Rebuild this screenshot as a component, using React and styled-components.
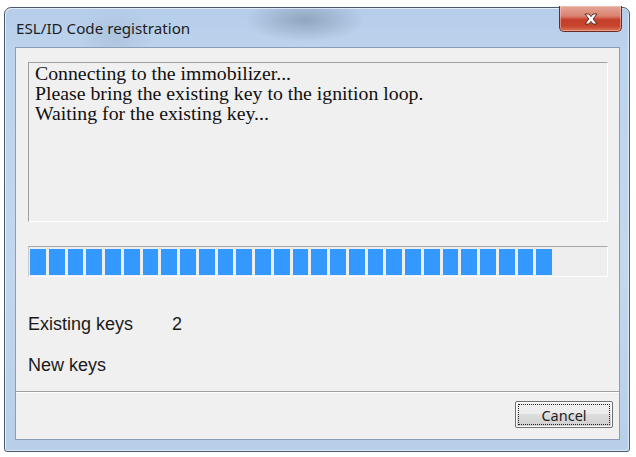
import styled, { createGlobalStyle } from "styled-components";

const GlobalStyle = createGlobalStyle`
  html, body {
    margin: 0;
    padding: 0;
    background: #ffffff;
  }
  body {
    width: 636px;
    height: 457px;
    overflow: hidden;
  }
`;

const BLOCKS = 28;

const App = () => {
  return (
    <>
      <GlobalStyle />
      <Window>
        <TitleBar>
          <Title>ESL/ID Code registration</Title>
          <CloseButton>
            <svg width="20" height="14" viewBox="0 0 20 14">
              <path
                d="M4 2 L8 2 L10 4.6 L12 2 L16 2 L12.2 7 L16 12 L12 12 L10 9.4 L8 12 L4 12 L7.8 7 Z"
                fill="#ffffff"
                stroke="#5a2a22"
                strokeWidth="1"
                strokeLinejoin="round"
              />
            </svg>
          </CloseButton>
        </TitleBar>
        <Client>
          <Body>
            <MessageBox>
              <p>Connecting to the immobilizer...</p>
              <p>Please bring the existing key to the ignition loop.</p>
              <p>Waiting for the existing key...</p>
            </MessageBox>
            <Progress>
              {Array.from({ length: BLOCKS }).map((_, i) => (
                <Block key={i} />
              ))}
            </Progress>
            <KeyRow $top={37}>
              <KeyLabel>Existing keys</KeyLabel>
              <KeyValue>2</KeyValue>
            </KeyRow>
            <KeyRow $top={20}>
              <KeyLabel>New keys</KeyLabel>
            </KeyRow>
          </Body>
          <Footer>
            <Button>
              <Focus>Cancel</Focus>
            </Button>
          </Footer>
        </Client>
      </Window>
    </>
  );
};

export default App;

const Window = styled.div`
  box-sizing: border-box;
  margin: 7px 0 0 4px;
  width: 626px;
  height: 445px;
  padding: 0 9px 11px 10px;
  border: 1px solid #4a5a6e;
  border-radius: 7px 7px 3px 3px;
  background:
    radial-gradient(ellipse 60px 22px at 300px 12px, rgba(70, 90, 115, 0.35), rgba(70, 90, 115, 0) 100%),
    radial-gradient(ellipse 40px 30px at 110px 30px, rgba(120, 140, 165, 0.2), rgba(120, 140, 165, 0) 100%),
    linear-gradient(180deg, #b5cde9 0%, #bdd4ee 10%, #c3d8ef 60%, #b7cfe9 100%);
  box-shadow: inset 1px 1px 0 rgba(255, 255, 255, 0.6), inset -1px -1px 0 rgba(255, 255, 255, 0.5);
  display: flex;
  flex-direction: column;
`;

const TitleBar = styled.div`
  height: 39px;
  display: flex;
  justify-content: space-between;
  align-items: flex-start;
`;

const Title = styled.div`
  margin: 11px 0 0 1px;
  font-family: "Noto Sans", "Open Sans", sans-serif;
  font-size: 15.2px;
  line-height: 18px;
  color: #1e1e1e;
`;

const CloseButton = styled.div`
  margin: -2px -2px 0 0;
  width: 63px;
  height: 26px;
  box-sizing: border-box;
  border: 1px solid #6b2b23;
  border-top: none;
  border-radius: 0 0 5px 5px;
  background: linear-gradient(180deg, #e6a79a 0%, #d9826f 40%, #c43f2b 55%, #c8442c 80%, #d9745a 100%);
  box-shadow: inset 0 0 0 1px rgba(255, 220, 210, 0.45);
  display: flex;
  align-items: center;
  justify-content: center;
`;

const Client = styled.div`
  flex: 1;
  background: #f0f0f0;
  border: 1px solid #8b9db3;
  display: flex;
  flex-direction: column;
`;

const Body = styled.div`
  height: 344px;
  padding: 14px 0 0 12px;
  box-sizing: border-box;
  border-bottom: 1px solid #a0a0a0;
  display: flex;
  flex-direction: column;
`;

const MessageBox = styled.div`
  box-sizing: border-box;
  width: 580px;
  height: 160px;
  padding: 0 0 0 6px;
  border-top: 1px solid #a0a0a0;
  border-left: 1px solid #a0a0a0;
  border-right: 1px solid #ffffff;
  border-bottom: 1px solid #ffffff;
  font-family: "Liberation Serif", "Times New Roman", serif;
  font-size: 19.8px;
  line-height: 20px;
  color: #111111;

  p {
    margin: 0;
  }
`;

const Progress = styled.div`
  box-sizing: border-box;
  margin-top: 24px;
  width: 580px;
  height: 31px;
  padding: 2px 1px 0 1px;
  border-top: 1px solid #a8a8a8;
  border-left: 1px solid #c8c8c8;
  border-right: 1px solid #ffffff;
  border-bottom: 1px solid #ffffff;
  background: #eeeeee;
  display: flex;
  gap: 3px;
`;

const Block = styled.div`
  width: 15.75px;
  height: 26px;
  background: #3399ff;
  flex-shrink: 0;
`;

const KeyRow = styled.div`
  margin-top: ${(p) => p.$top}px;
  display: flex;
  font-family: "Liberation Sans", Arial, sans-serif;
  font-size: 18px;
  line-height: 21px;
  color: #1a1a1a;
`;

const KeyLabel = styled.span`
  width: 144px;
`;

const KeyValue = styled.span``;

const Footer = styled.div`
  flex: 1;
  border-top: 1px solid #ffffff;
  display: flex;
  justify-content: flex-end;
  align-items: flex-start;
  padding: 8px 6px 0 0;
`;

const Button = styled.div`
  box-sizing: border-box;
  width: 98px;
  height: 27px;
  padding: 2px;
  border: 1px solid #707070;
  border-radius: 2px;
  background: linear-gradient(180deg, #f2f2f2 0%, #ebebeb 49%, #dddddd 50%, #cfcfcf 100%);
  box-shadow: inset 0 0 0 1px #fcfcfc;
`;

const Focus = styled.div`
  box-sizing: border-box;
  height: 100%;
  border: 1px dotted #222222;
  display: flex;
  align-items: center;
  justify-content: center;
  font-family: "Noto Sans", "Open Sans", sans-serif;
  font-size: 14.5px;
  color: #1e1e1e;
`;
